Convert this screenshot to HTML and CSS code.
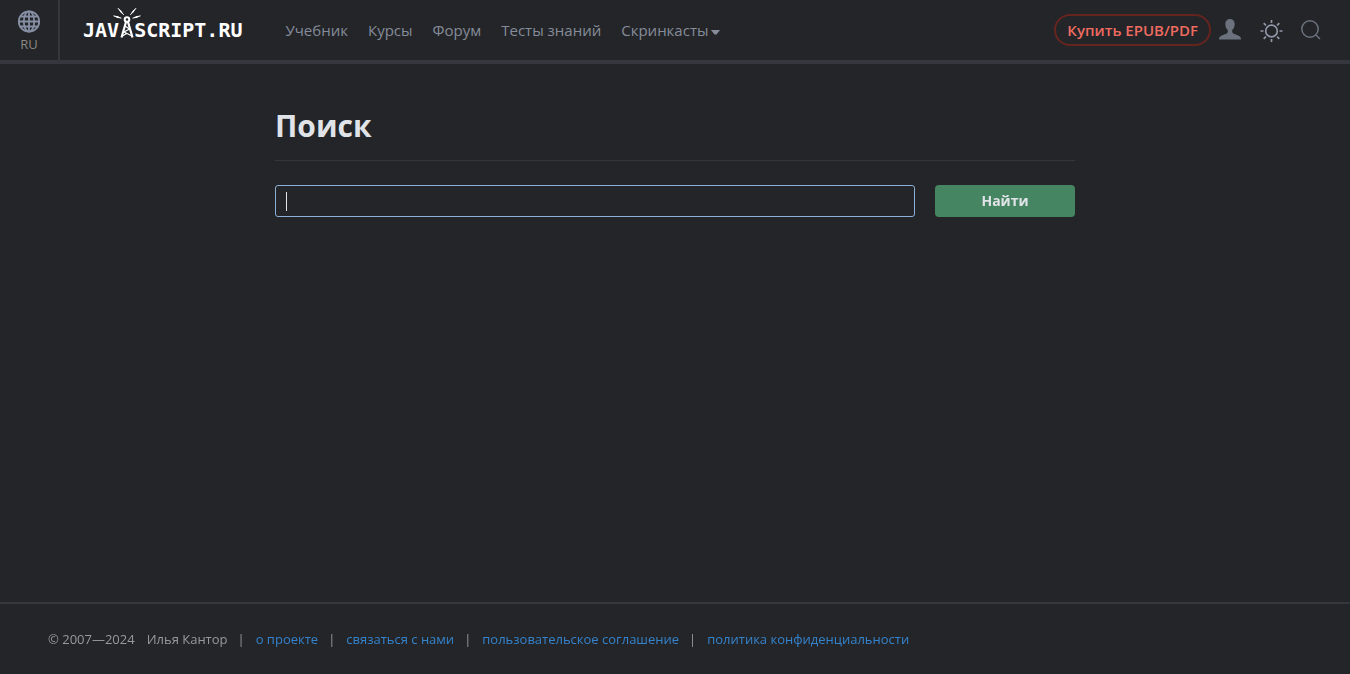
FILE: index.html
```html
<!DOCTYPE html>
<html lang="ru">
<head>
<meta charset="utf-8">
<title>Поиск</title>
<link rel="stylesheet" href="styles.css">
</head>
<body>
<header class="header">
  <button class="lang" type="button">
    <svg width="24" height="24" viewBox="0 0 24 24" fill="none" stroke="currentColor" stroke-width="1.8" aria-hidden="true">
      <circle cx="12" cy="11.500" r="10.2"/>
      <ellipse cx="12" cy="11.500" rx="5.200" ry="10.2"/>
      <path d="M12 1.500v20M2 11.500h20M4 6.500h16M4 16.500h16"/>
    </svg>
    <span>RU</span>
  </button>
  <a class="logo" href="#" aria-label="JAVASCRIPT.RU">
    <span>JAV</span>
    <svg class="logo-tower" width="28" height="31" viewBox="0 0 28 31" fill="none" stroke="currentColor" aria-hidden="true">
      <circle cx="14" cy="11.500" r="2.300" stroke-width="2"/>
      <path stroke-width="2.200" d="M13 14L8.500 29.500M15 14l4.500 15.500"/>
      <path stroke-width="1.200" d="M12 18l4.500 3L11 24l7 3.500M9.500 28l4-2.500"/>
      <path fill="currentColor" stroke="none" d="M4.800 0l3.400 2.700 2.600 4.200-3.400-2.700zM23.200 0l-3.400 2.700-2.600 4.200 3.400-2.700zM.4 7.800l4.200.2 3.900 2.200-4.200-.2zM27.600 7.800l-4.200.2-3.900 2.200 4.200-.2z"/>
      <path stroke-width=".8" d="M4.800 0l6 6.900M23.200 0l-6 6.900M.4 7.800l8.100 2.400M27.600 7.800l-8.100 2.400"/>
    </svg>
    <span>SCRIPT.RU</span>
  </a>
  <nav class="nav">
    <a href="#">Учебник</a>
    <a href="#">Курсы</a>
    <a href="#">Форум</a>
    <a href="#">Тесты знаний</a>
    <a class="more" href="#">Скринкасты<svg width="9" height="5" viewBox="0 0 9 5" fill="currentColor" aria-hidden="true"><path d="M0 0h9L5.500 4.500h-2z"/></svg></a>
  </nav>
  <a class="buy" href="#">Купить EPUB/PDF</a>
  <div class="tools">
    <button type="button" aria-label="Войти">
      <svg width="22" height="22" viewBox="0 0 22 22" fill="currentColor" aria-hidden="true"><path d="M11 0C8 0 6.300 2 6.300 5c0 2.500.9 4.800 2.500 6v2c-.3 1.600-2.300 2-4.800 2.900C1.400 16.900 0 17.500 0 20.500h22c0-3-1.400-3.600-4-4.600-2.500-.9-4.500-1.300-4.800-2.900v-2c1.600-1.200 2.500-3.500 2.500-6C15.700 2 14 0 11 0z"/></svg>
    </button>
    <button class="theme" type="button" aria-label="Сменить тему">
      <svg width="24" height="24" viewBox="0 0 24 24" fill="none" stroke="currentColor" stroke-width="1.700" aria-hidden="true"><circle cx="12.500" cy="13" r="5.800"/><path d="M12.500 2v3M12.500 21v3M1.500 13h3M20.500 13h3M4.700 5.200l2.200 2.200M18.100 18.600l2.200 2.200M4.700 20.800l2.200-2.200M18.100 7.400l2.200-2.200"/></svg>
    </button>
    <button type="button" aria-label="Поиск">
      <svg width="20" height="20" viewBox="0 0 20 20" fill="none" stroke="currentColor" stroke-width="1.500" aria-hidden="true"><circle cx="9" cy="9" r="8.200"/><path d="M15 15l4 4"/></svg>
    </button>
  </div>
</header>
<main class="main">
  <h1>Поиск</h1>
  <form class="search">
    <input type="text" name="query" placeholder=" " aria-label="Поисковый запрос" autocomplete="off" autofocus>
    <button type="submit">Найти</button>
  </form>
</main>
<footer class="footer">
  <span class="years">© 2007—2024</span>
  <span>Илья Кантор</span>
  <a href="#">о проекте</a>
  <a href="#">связаться с нами</a>
  <a href="#">пользовательское соглашение</a>
  <a href="#">политика конфиденциальности</a>
</footer>
</body>
</html>
```

FILE: styles.css
```css
* { box-sizing: border-box; }

body {
  margin: 0;
  min-height: 100vh;
  display: flex;
  flex-direction: column;
  background: #232529;
  color: #e0e3e7;
  font-family: "Open Sans", "Noto Sans", sans-serif;
}

button { font: inherit; cursor: pointer; }
a { text-decoration: none; }
svg { display: block; flex: none; }

.header {
  display: flex;
  align-items: center;
  height: 64px;
  padding-right: 29px;
  border-bottom: 4px solid #35363e;
  color: #868c98;
}

.lang {
  display: flex;
  flex-direction: column;
  align-items: center;
  align-self: stretch;
  width: 60px;
  padding: 10px 0 0;
  border: 0;
  border-right: 2px solid #35363e;
  background: none;
  color: #868fa3;
  font-size: 13px;
  line-height: 20px;
}
.lang span { color: #8b8780; }

.logo {
  display: flex;
  align-items: center;
  margin-left: 23px;
  color: #fff;
  font: bold 20px/24px "DejaVu Sans Mono", monospace;
}
.logo-tower { margin: 0 -7px 13px -6px; }

.nav {
  display: flex;
  gap: 20px;
  margin-left: 43px;
  font-size: 15px;
  line-height: 20px;
}
.nav a { color: #868c98; white-space: nowrap; }
.more { display: flex; align-items: center; gap: 3px; }
.more svg { margin-top: 4px; }

.buy {
  margin-left: auto;
  padding: 4px 11px;
  border: 2px solid #66241f;
  border-radius: 16px;
  color: #ee6b60;
  font-size: 15px;
  font-weight: 600;
  line-height: 20px;
  white-space: nowrap;
}

.tools {
  display: flex;
  align-items: center;
  gap: 18px;
  margin-left: 8px;
}
.tools button {
  padding: 0;
  border: 0;
  background: none;
  color: #6b717d;
}
.tools .theme { color: #9097a5; }

.main {
  flex: 1;
  width: 100%;
  max-width: 840px;
  margin: 0 auto;
  padding: 40px 20px;
}
h1 {
  margin: 0 0 24px;
  padding-bottom: 12px;
  border-bottom: 1px solid #35363a;
  font-size: 30px;
  font-weight: 700;
  line-height: 44px;
}
.search { display: flex; gap: 20px; }
.search input {
  flex: 1;
  min-width: 0;
  height: 32px;
  padding: 0 10px;
  border: 1px solid #8db0d8;
  border-radius: 3px;
  outline: none;
  background: transparent;
  color: #e0e3e7;
  font: 14px "Open Sans", "Noto Sans", sans-serif;
}
/* Steady caret while the field is empty */
.search input:placeholder-shown {
  caret-color: transparent;
  background: linear-gradient(#e0e3e7, #e0e3e7) 10px center / 1px 19px no-repeat;
}
.search button {
  width: 140px;
  height: 32px;
  padding: 0 0 2px;
  border: 0;
  border-radius: 4px;
  background: #468561;
  color: #e0e3e7;
  font-size: 14px;
  font-weight: 700;
}

.footer {
  display: flex;
  flex-wrap: wrap;
  padding: 25px 48px;
  border-top: 2px solid #35363e;
  color: #999;
  font-size: 13px;
  line-height: 20px;
}
.years { margin-right: 12px; }
.footer a { color: #3583cc; }
.footer a::before {
  content: "|";
  margin: 0 11px 0 10px;
  color: #999;
}
```
